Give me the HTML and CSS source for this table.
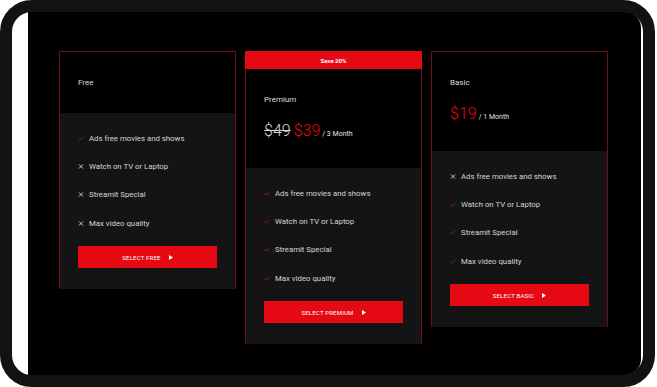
FILE: index.html
```html
<!DOCTYPE html>
<html>
<head>
<meta charset="utf-8">
<link rel="stylesheet" href="styles.css">
</head>
<body>
<div class="device">
  <div class="screen">
    <div class="card">
      <div class="head">
        <div class="title">Free</div>
      </div>
      <div class="body">
        <ul class="features">
          <li><svg class="ic" viewBox="0 0 6 5"><path d="M0.6 2.6 L2.2 4.1 L5.4 0.8" fill="none" stroke="#b3111b" stroke-width="0.9"/></svg>Ads free movies and shows</li>
          <li><svg class="ic" viewBox="0 0 6 5"><path d="M1 0.5 L5 4.5 M5 0.5 L1 4.5" fill="none" stroke="#ddd" stroke-width="0.9"/></svg>Watch on TV or Laptop</li>
          <li><svg class="ic" viewBox="0 0 6 5"><path d="M1 0.5 L5 4.5 M5 0.5 L1 4.5" fill="none" stroke="#ddd" stroke-width="0.9"/></svg>Streamit Special</li>
          <li><svg class="ic" viewBox="0 0 6 5"><path d="M1 0.5 L5 4.5 M5 0.5 L1 4.5" fill="none" stroke="#ddd" stroke-width="0.9"/></svg>Max video quality</li>
        </ul>
        <div class="btn">Select Free <svg class="play" viewBox="0 0 4 5"><path d="M0 0 L4 2.5 L0 5 Z" fill="#fff"/></svg></div>
      </div>
    </div>

    <div class="card">
      <div class="banner">Save 20%</div>
      <div class="head">
        <div class="title">Premium</div>
        <div class="price"><span class="old">$49</span><span class="amt">$39</span><span class="per">/ 3 Month</span></div>
      </div>
      <div class="body">
        <ul class="features">
          <li><svg class="ic" viewBox="0 0 6 5"><path d="M0.6 2.6 L2.2 4.1 L5.4 0.8" fill="none" stroke="#b3111b" stroke-width="0.9"/></svg>Ads free movies and shows</li>
          <li><svg class="ic" viewBox="0 0 6 5"><path d="M0.6 2.6 L2.2 4.1 L5.4 0.8" fill="none" stroke="#b3111b" stroke-width="0.9"/></svg>Watch on TV or Laptop</li>
          <li><svg class="ic" viewBox="0 0 6 5"><path d="M0.6 2.6 L2.2 4.1 L5.4 0.8" fill="none" stroke="#b3111b" stroke-width="0.9"/></svg>Streamit Special</li>
          <li><svg class="ic" viewBox="0 0 6 5"><path d="M0.6 2.6 L2.2 4.1 L5.4 0.8" fill="none" stroke="#b3111b" stroke-width="0.9"/></svg>Max video quality</li>
        </ul>
        <div class="btn">Select Premium <svg class="play" viewBox="0 0 4 5"><path d="M0 0 L4 2.5 L0 5 Z" fill="#fff"/></svg></div>
      </div>
    </div>

    <div class="card">
      <div class="head">
        <div class="title">Basic</div>
        <div class="price"><span class="amt">$19</span><span class="per">/ 1 Month</span></div>
      </div>
      <div class="body">
        <ul class="features">
          <li><svg class="ic" viewBox="0 0 6 5"><path d="M1 0.5 L5 4.5 M5 0.5 L1 4.5" fill="none" stroke="#ddd" stroke-width="0.9"/></svg>Ads free movies and shows</li>
          <li><svg class="ic" viewBox="0 0 6 5"><path d="M0.6 2.6 L2.2 4.1 L5.4 0.8" fill="none" stroke="#b3111b" stroke-width="0.9"/></svg>Watch on TV or Laptop</li>
          <li><svg class="ic" viewBox="0 0 6 5"><path d="M0.6 2.6 L2.2 4.1 L5.4 0.8" fill="none" stroke="#b3111b" stroke-width="0.9"/></svg>Streamit Special</li>
          <li><svg class="ic" viewBox="0 0 6 5"><path d="M0.6 2.6 L2.2 4.1 L5.4 0.8" fill="none" stroke="#b3111b" stroke-width="0.9"/></svg>Max video quality</li>
        </ul>
        <div class="btn">Select Basic <svg class="play" viewBox="0 0 4 5"><path d="M0 0 L4 2.5 L0 5 Z" fill="#fff"/></svg></div>
      </div>
    </div>
  </div>
</div>
</body>
</html>
```

FILE: styles.css
```css
* { box-sizing: border-box; }
html, body { margin: 0; padding: 0; background: #fff; }
body { font-family: Roboto, "Liberation Sans", sans-serif; }

.device {
  width: 655px;
  height: 387px;
  border: 12px solid #121212;
  border-radius: 32px;
  background: #fff;
  padding: 0 2px 0 16px;
}

.screen {
  height: 100%;
  background: #000;
  border-radius: 0 16px 16px 0;
  display: flex;
  align-items: flex-start;
  gap: 9px;
  padding: 39px 0 0 31px;
}

.card {
  width: 177px;
  border: 1px solid #6e0f17;
  border-bottom-color: #1a1212;
  background: #141414;
}

.banner {
  margin: -1px -1px 0;
  height: 18px;
  background: #e50914;
  color: #fff;
  font-size: 6px;
  font-weight: 700;
  display: flex;
  align-items: center;
  justify-content: center;
}

.head {
  background: #000;
  padding: 25px 18px 25px;
}

.title {
  color: #dcdcdc;
  font-size: 8px;
  line-height: 11px;
}

.price {
  margin-top: 14px;
  height: 24px;
  display: flex;
  align-items: baseline;
  line-height: 24px;
}

.old {
  color: #d8d8d8;
  font-size: 16px;
  font-weight: 300;
  text-decoration: line-through;
  margin-right: 3px;
}

.amt {
  color: #e50914;
  font-size: 16px;
  font-weight: 300;
  margin-right: 2px;
}

.per {
  color: #e0e0e0;
  font-size: 7px;
}

.body {
  padding: 11px 18px 20px;
}

.features {
  list-style: none;
  margin: 0;
  padding: 0;
}

.features li {
  height: 28.33px;
  display: flex;
  align-items: center;
  color: #d4d4d4;
  font-size: 7.8px;
}

.ic {
  width: 6px;
  height: 5px;
  margin-right: 5px;
  flex: none;
}

.btn {
  margin-top: 9px;
  height: 22px;
  background: #e50914;
  color: #fff;
  text-transform: uppercase;
  font-size: 6px;
  letter-spacing: 0.2px;
  display: flex;
  align-items: center;
  justify-content: center;
}

.play {
  width: 4px;
  height: 5px;
  margin-left: 8px;
}
```
